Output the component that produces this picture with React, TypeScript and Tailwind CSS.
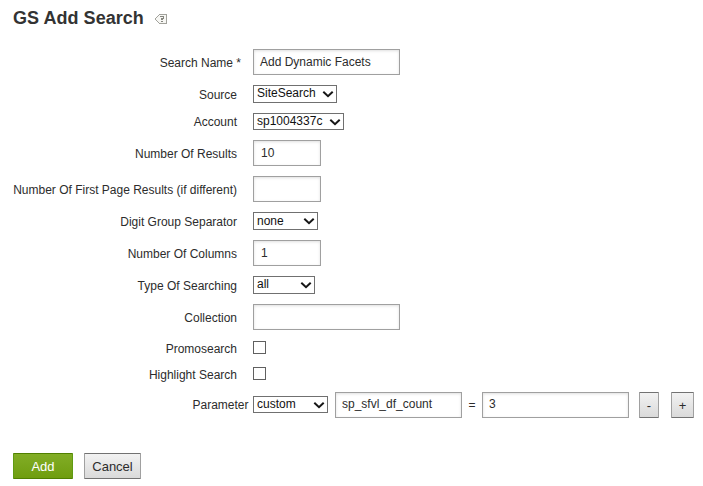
import React from "react";

function Field({ className, children }: { className: string; children?: React.ReactNode }) {
  return (
    <div
      className={
        "flex h-[26px] shrink-0 items-center border border-[#a0a0a0] bg-white text-[12px] leading-[14px] shadow-[inset_0_1px_3px_rgba(0,0,0,0.13)] " +
        className
      }
    >
      {children}
    </div>
  );
}

function Select({ className, textClass = "-mt-px", children }: { className: string; textClass?: string; children: React.ReactNode }) {
  return (
    <div className={"flex shrink-0 items-center justify-between border border-[#707070] bg-white pr-[2px] pl-[3px] text-[12px] leading-[14px] text-[#111] " + className}>
      <span className={textClass}>{children}</span>
      <svg width="12" height="8" viewBox="0 0 12 8" fill="none" stroke="#161616" strokeWidth="2">
        <path d="M1.3 1.7 L6 6.2 L10.7 1.7" />
      </svg>
    </div>
  );
}

function Row({ label, className, labelClass = "", children }: { label: React.ReactNode; className: string; labelClass?: string; children: React.ReactNode }) {
  return (
    <div className={"flex items-center " + className}>
      <div className={"w-[237px] shrink-0 text-right text-[12px] leading-[14px] " + labelClass}>{label}</div>
      <div className="ml-4 flex">{children}</div>
    </div>
  );
}

const Check = () => <div className="size-[13px] border border-[#606060] bg-white" />;

const buttonStyle =
  "flex h-[26px] shrink-0 items-center justify-center rounded-[1px] border border-x-[#a0a0a0] border-y-[#727272] bg-linear-to-b from-[#f2f2f2] to-[#dadada] pt-[2px] text-[13px] leading-4";

export default function App() {
  return (
    <div className="h-[486px] w-[703px] overflow-hidden bg-white font-['Liberation_Sans',Arial,sans-serif] text-[#2c2c2c]">
      <div className="flex h-[49px] items-start pt-[8px] pl-[13px]">
        <h1 className="w-[142px] text-[18px] leading-5 font-bold tracking-[0.04px] whitespace-nowrap text-[#333]">GS Add Search</h1>
        <svg width="12" height="10" viewBox="0 0 12 10" className="mt-[6px]" shapeRendering="crispEdges">
          <path d="M4 0h8v10H4V9H3V8H2V7H1V6H0V4h1V3h1V2h1V1h1z" fill="#a2a29c" />
          <path d="M4 1h7v8H4V8H3V7H2V6H1V4h1V3h1V2h1z" fill="#f7f7f4" />
          <path d="M5 2h4v1H5zM8 3h1v2H8zM6 4h2v2H6zM6 7h2v1H6z" fill="#85857e" />
        </svg>
      </div>

      <Row label={<>Search Name <span>*</span></>} className="h-[26px]" labelClass="pt-[2px] translate-x-1">
        <Field className="w-[147px] pl-[6px]">Add Dynamic Facets</Field>
      </Row>
      <Row label="Source" className="mt-[10px] h-[18px]" labelClass="pt-[2px]">
        <Select className="h-[18px] w-[84px]" textClass="-mt-[3px]">SiteSearch</Select>
      </Row>
      <Row label="Account" className="mt-[10px] h-[17px]">
        <Select className="h-[17px] w-[91px]">sp1004337c</Select>
      </Row>
      <Row label="Number Of Results" className="mt-[10px] h-[26px]" labelClass="pt-[2px]">
        <Field className="w-[68px] pl-[7px]">10</Field>
      </Row>
      <Row label="Number Of First Page Results (if different)" className="mt-[10px] h-[26px]" labelClass="pt-[2px]">
        <Field className="w-[68px]" />
      </Row>
      <Row label="Digit Group Separator" className="mt-[10px] h-[18px]" labelClass="pt-[2px]">
        <Select className="h-[18px] w-[65px]">none</Select>
      </Row>
      <Row label="Number Of Columns" className="mt-[10px] h-[26px]" labelClass="pt-[2px]">
        <Field className="w-[68px] pl-[7px]">1</Field>
      </Row>
      <Row label="Type Of Searching" className="mt-[10px] h-[18px]" labelClass="pt-[2px]">
        <Select className="h-[18px] w-[62px]" textClass="-mt-[3px]">all</Select>
      </Row>
      <Row label="Collection" className="mt-[10px] h-[26px]" labelClass="pt-[2px]">
        <Field className="w-[147px]" />
      </Row>
      <Row label="Promosearch" className="mt-[11px] h-[13px]" labelClass="pt-[2px]">
        <Check />
      </Row>
      <Row label="Highlight Search" className="mt-[13px] h-[13px]" labelClass="pt-[2px]">
        <Check />
      </Row>

      <div className="mt-[12px] flex h-[26px] items-center text-[12px] leading-[14px]">
        <div className="w-[249px] shrink-0 pr-[0.5px] text-right">Parameter</div>
        <Select className="-mt-px ml-1 h-[17px] w-[75px]">custom</Select>
        <Field className="ml-[7px] w-[127px] pb-[2px] pl-[6px]">sp_sfvl_df_count</Field>
        <div className="w-5 shrink-0 text-center">=</div>
        <Field className="w-[147px] pb-[2px] pl-[6px]">3</Field>
        <div className={buttonStyle + " ml-[10px] w-5"}>-</div>
        <div className={buttonStyle + " ml-3 w-[23px]"}>+</div>
      </div>

      <div className="mt-[35px] ml-[13px] flex gap-[11px]">
        <div className="flex h-[26px] w-[60px] items-center justify-center rounded-[1px] border border-x-[#609b12] border-y-[#508000] bg-linear-to-b from-[#82ad25] to-[#6f9d0e] pt-[2px] text-[13px] leading-4 text-white">
          Add
        </div>
        <div className={buttonStyle + " w-[57px]"}>Cancel</div>
      </div>
    </div>
  );
}
